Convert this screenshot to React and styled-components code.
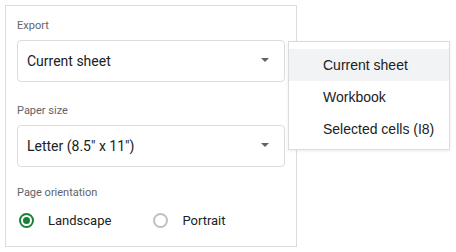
import styled, { createGlobalStyle } from "styled-components";

const GlobalStyle = createGlobalStyle`
  html, body {
    margin: 0;
    background: #ffffff;
    font-family: Roboto, "Liberation Sans", Arial, sans-serif;
  }
`;

const exportOptions = ["Current sheet", "Workbook", "Selected cells (I8)"];

export default function App() {
  return (
    <>
      <GlobalStyle />
      <Page>
        <Panel>
          <Label>Export</Label>
          <Select>
            <SelectValue>Current sheet</SelectValue>
            <Caret />
            <Menu>
              {exportOptions.map((option, index) => (
                <MenuItem key={option} $active={index === 0}>
                  {option}
                </MenuItem>
              ))}
            </Menu>
          </Select>

          <Label $gap="21px">Paper size</Label>
          <Select>
            <SelectValue>Letter (8.5" x 11")</SelectValue>
            <Caret />
          </Select>

          <Label $gap="18px">Page orientation</Label>
          <Options>
            <Option>
              <Radio $checked />
              Landscape
            </Option>
            <Option>
              <Radio />
              Portrait
            </Option>
          </Options>
        </Panel>
      </Page>
    </>
  );
}

function Caret() {
  return (
    <CaretIcon width="8" height="4" viewBox="0 0 8 4">
      <path d="M0 0L4 4L8 0z" fill="#5f6368" />
    </CaretIcon>
  );
}

const Page = styled.div`
  padding: 5px 0 0 5px;
`;

const Panel = styled.div`
  width: 268px;
  padding: 12px 11px 16px;
  border: 1px solid #dadce0;
  display: flex;
  flex-direction: column;
`;

const Label = styled.div`
  font-size: 11px;
  line-height: 16px;
  color: #5f6368;
  margin-top: ${({ $gap }) => $gap || "0"};
  margin-bottom: 6px;
`;

const Select = styled.div`
  position: relative;
  height: 40px;
  border: 1px solid #dadce0;
  border-radius: 4px;
  display: flex;
  align-items: center;
  justify-content: space-between;
  padding: 0 15px 0 9px;
`;

const SelectValue = styled.span`
  font-size: 14px;
  color: #202124;
`;

const CaretIcon = styled.svg`
  display: block;
  margin-top: -3px;
`;

const Menu = styled.div`
  position: absolute;
  left: calc(100% + 4px);
  top: 0;
  width: 160px;
  padding: 7px 0 4px;
  background: #ffffff;
  border: 1px solid #dadce0;
  box-shadow: 0 1px 3px rgba(60, 64, 67, 0.1);
  z-index: 2;
`;

const MenuItem = styled.div`
  height: 32px;
  display: flex;
  align-items: center;
  padding-left: 34px;
  font-family: "Liberation Sans", Arial, sans-serif;
  font-size: 14px;
  color: #202124;
  background: ${({ $active }) => ($active ? "#f1f3f4" : "transparent")};
`;

const Options = styled.div`
  display: flex;
  align-items: center;
  gap: 42px;
  margin-top: 3px;
  padding-left: 2px;
  height: 20px;
`;

const Option = styled.label`
  display: flex;
  align-items: center;
  gap: 14px;
  font-size: 13px;
  color: #202124;
`;

const Radio = styled.span`
  box-sizing: border-box;
  width: 15px;
  height: 15px;
  border-radius: 50%;
  border: 2px solid ${({ $checked }) => ($checked ? "#188038" : "#bdc1c6")};
  display: flex;
  align-items: center;
  justify-content: center;

  &::after {
    content: "";
    width: 7px;
    height: 7px;
    border-radius: 50%;
    background: ${({ $checked }) => ($checked ? "#188038" : "transparent")};
  }
`;
